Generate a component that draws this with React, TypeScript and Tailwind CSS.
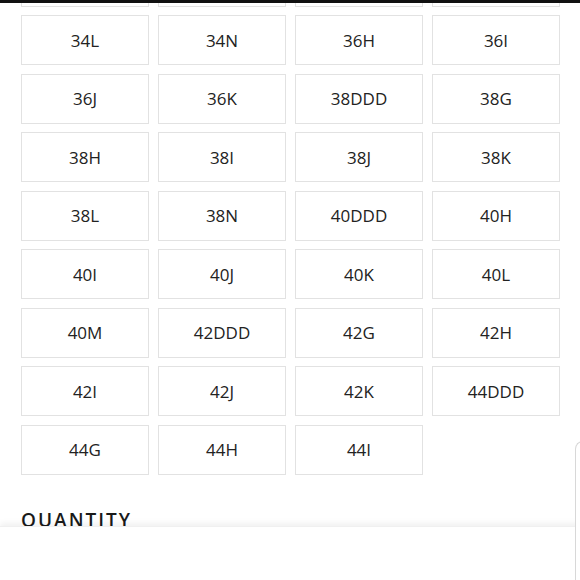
const sizes = [
  "", "", "", "",
  "34L", "34N", "36H", "36I",
  "36J", "36K", "38DDD", "38G",
  "38H", "38I", "38J", "38K",
  "38L", "38N", "40DDD", "40H",
  "40I", "40J", "40K", "40L",
  "40M", "42DDD", "42G", "42H",
  "42I", "42J", "42K", "44DDD",
  "44G", "44H", "44I",
];

export default function App() {
  return (
    <div
      className="relative w-[580px] h-[580px] overflow-hidden bg-white text-[#222]"
      style={{ fontFamily: '"Open Sans", "Noto Sans", sans-serif' }}
    >
      <div className="pl-[21px] pr-[20px] mt-[-43.5px]">
        <div className="grid grid-cols-[repeat(4,128px)] gap-x-[9px] gap-y-[8.5px]">
          {sizes.map((s, i) => (
            <button
              key={i}
              className="h-[50px] border border-[#e2e2e2] bg-white flex items-center justify-center text-[17px] leading-none"
            >
              {s}
            </button>
          ))}
        </div>
        <h3 className="mt-[33px] text-[19px] font-semibold tracking-[2px] leading-[24px] text-[#1a1a1a]">
          QUANTITY
        </h3>
      </div>

      {/* top bar */}
      <div className="absolute top-0 left-0 right-0 h-[3px] bg-[#111]" />

      {/* bottom sheet */}
      <div className="absolute left-0 right-0 top-[526px] bottom-0 bg-white shadow-[0_-3px_6px_rgba(0,0,0,0.06)] border-t border-[#f0f0f0]" />

      {/* right edge tab */}
      <div className="absolute left-[575px] top-[441px] w-[20px] bottom-0 bg-white border-l border-t border-[#d8d8d8] rounded-tl-[8px]" />
    </div>
  );
}
